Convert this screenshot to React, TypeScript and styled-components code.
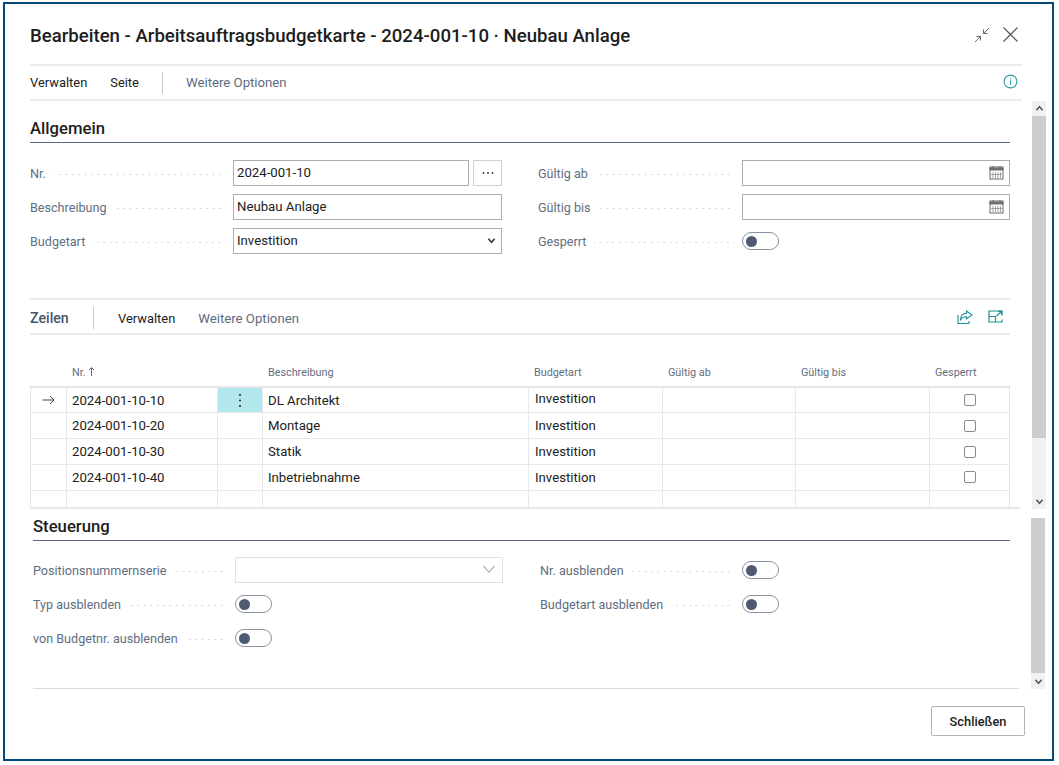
import React from "react";
import styled, { createGlobalStyle } from "styled-components";

const Global = createGlobalStyle`
  html, body { margin: 0; padding: 0; background: #fff; }
  body { font-family: Roboto, "Open Sans", "Liberation Sans", sans-serif; color: #212121; }
  * { box-sizing: border-box; }
`;

const Frame = styled.div`
  margin: 2px 0 0 3px;
  width: 1051px;
  height: 759px;
  border: 2px solid #034a7d;
  display: flex;
  flex-direction: column;
`;

const Header = styled.header`
  margin: 0 30px 0 25px;
  height: 62px;
  border-bottom: 2px solid #ececec;
  display: flex;
  align-items: center;
  justify-content: space-between;
  padding: 4px 0 0;
`;

const Title = styled.h1`
  margin: 0;
  font-size: 18.6px;
  font-weight: 500;
  color: #1d1d1d;
`;

const WindowTools = styled.div`
  display: flex;
  align-items: center;
  gap: 12px;
  margin-right: 3px;
  margin-top: -3px;
`;

const MenuBar = styled.nav`
  margin: 0 30px 0 25px;
  height: 35px;
  border-bottom: 2px solid #ececec;
  display: flex;
  align-items: center;
`;

const MenuItem = styled.span<{ $muted?: boolean }>`
  font-size: ${(p) => (p.$muted ? 13.2 : 12.9)}px;
  color: ${(p) => (p.$muted ? "#5d6b7f" : "#212121")};
  margin-right: 23px;
`;

const MenuSep = styled.span`
  width: 1px;
  height: 22px;
  background: #c9c9c9;
  margin-right: 23px;
`;

const InfoSlot = styled.span`
  margin-left: auto;
  display: flex;
  margin-right: 4px;
  margin-top: -3px;
`;

const UpperPane = styled.div`
  display: flex;
  height: 408px;
  margin-left: 25px;
`;

const UpperMain = styled.main`
  width: 990px;
  padding-right: 10px;
  border-bottom: 2px solid #e6e8eb;
`;

const Scrollbar = styled.div<{ $thumb: number }>`
  width: 14px;
  margin-left: 12px;
  background: #f1f1f1;
  display: flex;
  flex-direction: column;
  align-self: stretch;
  & > i {
    display: block;
    flex: 0 0 ${(p) => p.$thumb}px;
    background: #cdcdcd;
  }
  & > span {
    flex: 0 0 15px;
    display: flex;
    align-items: center;
    justify-content: center;
  }
  & > span:last-child { margin-top: auto; }
`;

const SectionTitle = styled.div<{ $top: number; $h: number; $pad: number }>`
  margin-top: ${(p) => p.$top}px;
  height: ${(p) => p.$h}px;
  padding-bottom: ${(p) => p.$pad}px;
  display: flex;
  align-items: center;
  font-size: 16.7px;
  font-weight: 500;
  color: #1d1d1d;
  border-bottom: 1.5px solid #5d6b80;
`;

const FormGrid = styled.div<{ $gap: number; $top: number; $cols: string }>`
  margin-top: ${(p) => p.$top}px;
  display: grid;
  grid-template-columns: ${(p) => p.$cols};
  column-gap: ${(p) => p.$gap}px;
`;

const Column = styled.div<{ $labelW: number }>`
  display: flex;
  flex-direction: column;
  gap: 8px;
  --label-w: ${(p) => p.$labelW}px;
`;

const Row = styled.div`
  display: grid;
  grid-template-columns: var(--label-w) 1fr;
  height: 26px;
  align-items: center;
`;

const Label = styled.div`
  display: flex;
  align-items: center;
  padding-right: 8px;
  font-size: 12.6px;
  color: #616e81;
  white-space: nowrap;
`;

const Leader = styled.span`
  flex: 1;
  height: 3px;
  margin-left: 8px;
  margin-top: 3px;
  background-image: radial-gradient(circle at 1px 1.5px, #d2d5da 0.7px, transparent 1px);
  background-size: 6.4px 3px;
  background-position: right;
`;

const InputWrap = styled.div`
  display: flex;
  gap: 4px;
  height: 100%;
`;

const Input = styled.div<{ $disabled?: boolean }>`
  flex: 1;
  height: 26px;
  border: 1px solid ${(p) => (p.$disabled ? "#dfe1e4" : "#a8adb6")};
  display: flex;
  align-items: center;
  justify-content: space-between;
  padding: 0 5px 2px 3px;
  font-size: 13.2px;
  color: #212121;
  background: #fff;
`;

const DotsButton = styled.div`
  width: 29px;
  height: 26px;
  border: 1px solid #cdd0d5;
  display: flex;
  align-items: center;
  justify-content: center;
`;

const Toggle = styled.div`
  width: 37px;
  height: 18px;
  border: 1px solid #8b93a0;
  border-radius: 9px;
  display: flex;
  align-items: center;
  padding-left: 3px;
  & > i {
    display: block;
    width: 11px;
    height: 11px;
    border-radius: 50%;
    background: #4d5a70;
  }
`;

const LinesBar = styled.div`
  margin-top: 44px;
  height: 37px;
  padding-top: 3px;
  border-top: 2px solid #ececec;
  border-bottom: 2px solid #ececec;
  display: flex;
  align-items: center;
`;

const LinesTitle = styled.span`
  font-size: 14.2px;
  font-weight: 500;
  color: #46546a;
  border-right: 1px solid #c9c9c9;
  height: 22px;
  display: flex;
  align-items: center;
  margin-right: 24px;
  width: 64px;
  flex: none;
`;

const LineIcons = styled.span`
  margin-left: auto;
  display: flex;
  gap: 15px;
  margin-right: 7px;
  margin-top: -2px;
`;

const Table = styled.div`
  margin-top: 25px;
  --cols: 37px 151px 45px 266px 134px 133px 134px 80px;
`;

const HeadRow = styled.div`
  display: grid;
  grid-template-columns: var(--cols);
  height: 26px;
  padding-bottom: 2px;
  align-items: center;
  font-size: 10.8px;
  color: #616e81;
`;

const HeadCell = styled.span`
  padding-left: 5px;
`;

const BodyRows = styled.div`
  border: 1px solid #e3e5e8;
  border-width: 2px 1px 0 1px;
`;

const DataRow = styled.div<{ $h: number }>`
  display: grid;
  grid-template-columns: var(--cols);
  margin-left: -1px;
  height: ${(p) => p.$h}px;
  border-bottom: 1.5px solid #e6e8eb;
  &:last-child { border-bottom: 0; }
`;

const Cell = styled.div<{ $tint?: boolean; $center?: boolean; $raise?: number; $indent?: number }>`
  border-right: 1.5px solid #e6e8eb;
  &:last-child { border-right: 0; }
  display: flex;
  align-items: center;
  justify-content: ${(p) => (p.$center ? "center" : "flex-start")};
  padding: 0 0 ${(p) => p.$raise ?? 0}px ${(p) => (p.$center ? 0 : p.$indent ?? 5)}px;
  font-size: 13.2px;
  color: #212121;
  background: ${(p) => (p.$tint ? "#b2e7ec" : "transparent")};
`;

const Checkbox = styled.span`
  width: 12px;
  height: 12px;
  border: 1.5px solid #8a8a8a;
  border-radius: 2px;
`;

const Gap = styled.div`
  height: 9px;
  flex: none;
`;

const LowerPane = styled.div`
  display: flex;
  height: 171px;
  margin-left: 28px;
`;

const LowerMain = styled.section`
  width: 986px;
  padding-right: 9px;
  border-bottom: 1.5px solid #dcdcdc;
`;

const Footer = styled.footer`
  flex: 1;
  display: flex;
  justify-content: flex-end;
  align-items: flex-start;
  padding: 17px 27px 0 0;
`;

const CloseButton = styled.button`
  width: 94px;
  height: 30px;
  background: #fff;
  border: 1px solid #b4b4b4;
  border-radius: 2px;
  font-family: inherit;
  font-size: 12.8px;
  font-weight: 500;
  color: #212121;
  padding: 0;
`;

const Chevron = ({
  dir,
  color = "#555",
  size = 9,
  weight = 1.6,
}: {
  dir: "up" | "down";
  color?: string;
  size?: number;
  weight?: number;
}) => (
  <svg width={size} height={size} viewBox="0 0 10 10" fill="none" stroke={color} strokeWidth={weight}>
    <path d={dir === "up" ? "M1.5 7 5 3l3.5 4" : "M1.5 3 5 7l3.5-4"} />
  </svg>
);

const Compress = () => (
  <svg width="16" height="16" viewBox="0 0 16 16" fill="none" stroke="#666" strokeWidth="1">
    <path d="M15 1 9.5 6.5M9.5 2.5v4h4M1 15l5.5-5.5M6.5 13.5v-4h-4" />
  </svg>
);

const CloseX = () => (
  <svg width="17" height="17" viewBox="0 0 17 17" fill="none" stroke="#555" strokeWidth="1.2">
    <path d="M1.5 1.5l14 14M15.5 1.5l-14 14" />
  </svg>
);

const Info = () => (
  <svg width="15" height="15" viewBox="0 0 15 15" fill="none" stroke="#2a9aa3" strokeWidth="1.1">
    <circle cx="7.5" cy="7.5" r="6.4" />
    <path d="M7.5 6.5v4.2M7.5 4.2v1.2" />
  </svg>
);

const Calendar = () => (
  <svg width="15" height="15" viewBox="0 0 15 15" fill="none" stroke="#66686b" strokeWidth="1">
    <rect x="1" y="2" width="13" height="12" fill="#fff" />
    <path d="M1 3h13v2H1z" fill="#77797c" />
    <path d="M4 1v2M11 1v2" />
    <path d="M4 7v6M6.5 7v6M9 7v6M11.5 7v6M2 9.5h11" strokeWidth=".8" stroke="#8e9093" />
  </svg>
);

const Share = () => (
  <svg width="16" height="14" viewBox="0 0 16 14" fill="none" stroke="#1f8f99" strokeWidth="1.1">
    <path d="M1 5v8.5h11V11" />
    <path d="M9.5 1 15 5 9.5 9V6.8C6.5 6.8 4.5 7.8 3.3 10.5 3.5 6.5 5.8 3.5 9.5 3.3z" />
  </svg>
);

const Expand = () => (
  <svg width="15" height="13" viewBox="0 0 15 13" fill="none" stroke="#1f8f99" strokeWidth="1.2">
    <path d="M14 5.5V1H1v11h13V9.5" />
    <path d="M1 6.5h6.5V12" />
    <path d="M8.5 6 13.5 1.5M10 1.3h3.7V5" />
  </svg>
);

const ArrowRight = () => (
  <svg width="13" height="10" viewBox="0 0 13 10" fill="none" stroke="#444" strokeWidth="1">
    <path d="M0.5 5h11.5M8 1l4 4-4 4" />
  </svg>
);

const ArrowUp = () => (
  <svg width="7" height="9" viewBox="0 0 7 9" fill="none" stroke="#5d6b7f" strokeWidth="1">
    <path d="M3.5 9V1M1 3l2.5-2.5L6 3" />
  </svg>
);

const Dots = () => (
  <svg width="14" height="4" viewBox="0 0 14 4" fill="#444">
    <circle cx="2.5" cy="2" r="1" />
    <circle cx="7" cy="2" r="1" />
    <circle cx="11.5" cy="2" r="1" />
  </svg>
);

const VDots = () => (
  <svg width="4" height="15" viewBox="0 0 4 15" fill="#333">
    <circle cx="2" cy="2" r="1.1" />
    <circle cx="2" cy="7.5" r="1.1" />
    <circle cx="2" cy="13" r="1.1" />
  </svg>
);

const Field = ({ label, children }: { label: string; children: React.ReactNode }) => (
  <Row>
    <Label>
      {label}
      <Leader />
    </Label>
    {children}
  </Row>
);

const OffToggle = () => (
  <Toggle>
    <i />
  </Toggle>
);

const rows = [
  { nr: "2024-001-10-10", text: "DL Architekt", active: true, h: 25 },
  { nr: "2024-001-10-20", text: "Montage", h: 26 },
  { nr: "2024-001-10-30", text: "Statik", h: 26 },
  { nr: "2024-001-10-40", text: "Inbetriebnahme", h: 25.5 },
];

export default function App() {
  return (
    <>
      <Global />
      <Frame>
        <Header>
          <Title>Bearbeiten - Arbeitsauftragsbudgetkarte - 2024-001-10 · Neubau Anlage</Title>
          <WindowTools>
            <Compress />
            <CloseX />
          </WindowTools>
        </Header>
        <MenuBar>
          <MenuItem>Verwalten</MenuItem>
          <MenuItem>Seite</MenuItem>
          <MenuSep />
          <MenuItem $muted>Weitere Optionen</MenuItem>
          <InfoSlot>
            <Info />
          </InfoSlot>
        </MenuBar>
        <UpperPane>
          <UpperMain>
            <SectionTitle $top={13} $h={29} $pad={0}>
              Allgemein
            </SectionTitle>
            <FormGrid $gap={36} $top={17} $cols="472px 472px">
              <Column $labelW={203}>
                <Field label="Nr.">
                  <InputWrap>
                    <Input>2024-001-10</Input>
                    <DotsButton>
                      <Dots />
                    </DotsButton>
                  </InputWrap>
                </Field>
                <Field label="Beschreibung">
                  <Input>Neubau Anlage</Input>
                </Field>
                <Field label="Budgetart">
                  <Input>
                    Investition
                    <Chevron dir="down" color="#333" />
                  </Input>
                </Field>
              </Column>
              <Column $labelW={204}>
                <Field label="Gültig ab">
                  <Input>
                    <span />
                    <Calendar />
                  </Input>
                </Field>
                <Field label="Gültig bis">
                  <Input>
                    <span />
                    <Calendar />
                  </Input>
                </Field>
                <Field label="Gesperrt">
                  <OffToggle />
                </Field>
              </Column>
            </FormGrid>
            <LinesBar>
              <LinesTitle>Zeilen</LinesTitle>
              <MenuItem>Verwalten</MenuItem>
              <MenuItem $muted>Weitere Optionen</MenuItem>
              <LineIcons>
                <Share />
                <Expand />
              </LineIcons>
            </LinesBar>
            <Table>
              <HeadRow>
                <span />
                <HeadCell>
                  Nr. <ArrowUp />
                </HeadCell>
                <span />
                <HeadCell>Beschreibung</HeadCell>
                <HeadCell>Budgetart</HeadCell>
                <HeadCell>Gültig ab</HeadCell>
                <HeadCell>Gültig bis</HeadCell>
                <HeadCell>Gesperrt</HeadCell>
              </HeadRow>
              <BodyRows>
                {rows.map((r) => (
                  <DataRow key={r.nr} $h={r.h}>
                    <Cell $center>{r.active && <ArrowRight />}</Cell>
                    <Cell>{r.nr}</Cell>
                    <Cell $center $tint={r.active}>
                      {r.active && <VDots />}
                    </Cell>
                    <Cell>{r.text}</Cell>
                    <Cell $raise={r.active ? 4 : 0} $indent={6}>
                      Investition
                    </Cell>
                    <Cell />
                    <Cell />
                    <Cell $center>
                      <Checkbox />
                    </Cell>
                  </DataRow>
                ))}
                <DataRow $h={18}>
                  <Cell />
                  <Cell />
                  <Cell />
                  <Cell />
                  <Cell />
                  <Cell />
                  <Cell />
                  <Cell />
                </DataRow>
              </BodyRows>
            </Table>
          </UpperMain>
          <Scrollbar $thumb={322}>
            <span>
              <Chevron dir="up" />
            </span>
            <i />
            <span>
              <Chevron dir="down" />
            </span>
          </Scrollbar>
        </UpperPane>
        <Gap />
        <LowerPane>
          <LowerMain>
            <SectionTitle $top={0} $h={23} $pad={6}>
              Steuerung
            </SectionTitle>
            <FormGrid $gap={37} $top={16} $cols="470px 469px">
              <Column $labelW={202}>
                <Field label="Positionsnummernserie">
                  <Input $disabled>
                    <span />
                    <Chevron dir="down" color="#a9adb3" size={16} weight={0.7} />
                  </Input>
                </Field>
                <Field label="Typ ausblenden">
                  <OffToggle />
                </Field>
                <Field label="von Budgetnr. ausblenden">
                  <OffToggle />
                </Field>
              </Column>
              <Column $labelW={202}>
                <Field label="Nr. ausblenden">
                  <OffToggle />
                </Field>
                <Field label="Budgetart ausblenden">
                  <OffToggle />
                </Field>
              </Column>
            </FormGrid>
          </LowerMain>
          <Scrollbar $thumb={155}>
            <i />
            <span>
              <Chevron dir="down" />
            </span>
          </Scrollbar>
        </LowerPane>
        <Footer>
          <CloseButton>Schließen</CloseButton>
        </Footer>
      </Frame>
    </>
  );
}
